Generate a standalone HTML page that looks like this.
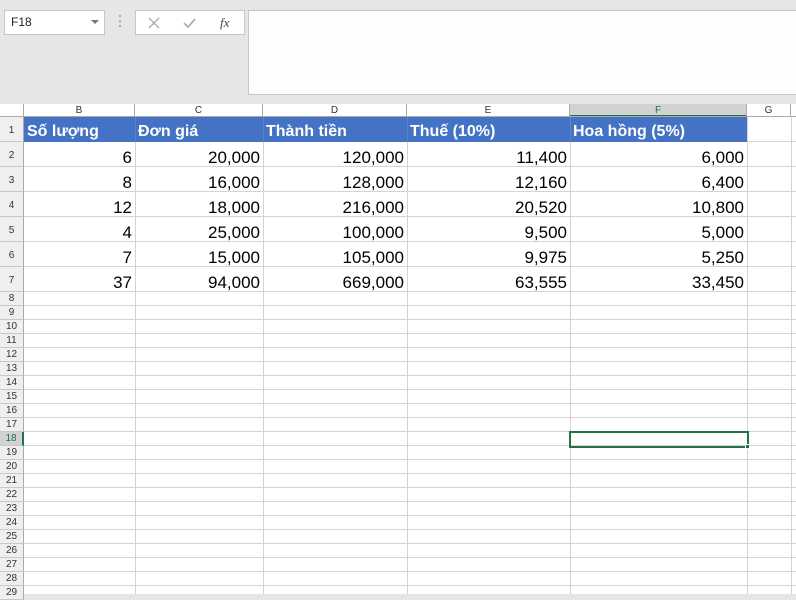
<!DOCTYPE html>
<html><head><meta charset="utf-8"><style>
*{margin:0;padding:0;box-sizing:border-box}
body{width:796px;height:594px;overflow:hidden;background:#e6e6e6;position:relative;font-family:"Liberation Sans",sans-serif}
.a{position:absolute}
.ch{position:absolute;top:104px;height:13px;font-size:10px;color:#333;text-align:center;line-height:13px;border-right:1px solid #ababab;background:#fff}
.rn{position:absolute;left:0;width:24px;font-size:10px;color:#333;text-align:center;background:#efefef;border-bottom:1px solid #c8c8c8;border-right:1px solid #ababab}
.c{position:absolute;font-size:17px;color:#000;text-align:right;padding-right:3px;line-height:25px;height:25px;margin-top:2px}
.h{position:absolute;top:119px;height:25px;line-height:25px;font-size:16px;font-weight:bold;color:#fff;padding-left:3px}
</style></head><body>
<div class="a" style="left:4px;top:10px;width:101px;height:25px;background:#fff;border:1px solid #c6c6c6;font-size:12px;line-height:23px;padding-left:6px;color:#222">F18</div>
<div class="a" style="left:91px;top:20px;width:0;height:0;border-left:4px solid transparent;border-right:4px solid transparent;border-top:4px solid #777"></div>
<div class="a" style="left:119px;top:15px;width:2px;height:2px;background:#aaa;box-shadow:0 5px 0 #aaa,0 10px 0 #aaa"></div>
<div class="a" style="left:135px;top:10px;width:110px;height:25px;background:#fff;border:1px solid #c6c6c6"></div>
<svg class="a" style="left:146px;top:15px" width="90" height="16"><path d="M3 3l10 10M13 3l-10 10" stroke="#b0b0b0" stroke-width="1.5"/><path d="M38 8l4 4 7-8" stroke="#b0b0b0" stroke-width="1.8" fill="none"/><text x="74" y="12" font-family="Liberation Serif" font-style="italic" font-size="13" fill="#444">fx</text></svg>
<div class="a" style="left:248px;top:10px;width:548px;height:85px;background:#fdfdfd;border:1px solid #c6c6c6;border-right:none"></div>
<div class="a" style="left:0;top:104px;width:796px;height:490px;background:#fff"></div>
<div class="a" style="left:0;top:104px;width:24px;height:13px;background:#fff;border-right:1px solid #ababab;border-bottom:1px solid #ababab"></div>
<div class="ch" style="left:24px;width:111px">B</div>
<div class="ch" style="left:135px;width:128px">C</div>
<div class="ch" style="left:263px;width:144px">D</div>
<div class="ch" style="left:407px;width:163px">E</div>
<div class="ch" style="left:570px;width:177px;background:#d2d2d2;border-bottom:2px solid #217346;color:#217346">F</div>
<div class="ch" style="left:747px;width:44px">G</div>
<div class="a" style="left:0;top:116px;width:796px;height:1px;background:#ababab"></div>
<div class="a" style="left:24px;top:117px;width:772px;height:477px;background:
linear-gradient(90deg,transparent 111px,#d4d4d4 111px,#d4d4d4 112px,transparent 112px,transparent 239px,#d4d4d4 239px,#d4d4d4 240px,transparent 240px,transparent 383px,#d4d4d4 383px,#d4d4d4 384px,transparent 384px,transparent 546px,#d4d4d4 546px,#d4d4d4 547px,transparent 547px,transparent 723px,#d4d4d4 723px,#d4d4d4 724px,transparent 724px,transparent 767px,#d4d4d4 767px,#d4d4d4 768px,transparent 768px)"></div>
<div class="a" style="left:24px;top:117px;width:772px;height:175px;background:repeating-linear-gradient(180deg,transparent 0,transparent 24px,#d4d4d4 24px,#d4d4d4 25px)"></div>
<div class="a" style="left:24px;top:292px;width:772px;height:302px;background:repeating-linear-gradient(180deg,transparent 0,transparent 13px,#d4d4d4 13px,#d4d4d4 14px)"></div>
<div class="a" style="left:24px;top:117px;width:723px;height:25px;background:#4472c4"></div>
<div class="a" style="left:24px;top:117px;width:723px;height:25px;background:linear-gradient(90deg,transparent 111px,#5a83cc 111px,#5a83cc 112px,transparent 112px,transparent 239px,#5a83cc 239px,#5a83cc 240px,transparent 240px,transparent 383px,#5a83cc 383px,#5a83cc 384px,transparent 384px,transparent 546px,#5a83cc 546px,#5a83cc 547px,transparent 547px)"></div>
<div class="h" style="left:24px">Số lượng</div>
<div class="h" style="left:135px">Đơn giá</div>
<div class="h" style="left:263px">Thành tiền</div>
<div class="h" style="left:407px">Thuế (10%)</div>
<div class="h" style="left:570px">Hoa hồng (5%)</div>
<div class="rn" style="top:117px;height:25px;line-height:28px">1</div>
<div class="rn" style="top:142px;height:25px;line-height:28px">2</div>
<div class="rn" style="top:167px;height:25px;line-height:28px">3</div>
<div class="rn" style="top:192px;height:25px;line-height:28px">4</div>
<div class="rn" style="top:217px;height:25px;line-height:28px">5</div>
<div class="rn" style="top:242px;height:25px;line-height:28px">6</div>
<div class="rn" style="top:267px;height:25px;line-height:28px">7</div>
<div class="rn" style="top:292px;height:14px;line-height:14px">8</div>
<div class="rn" style="top:306px;height:14px;line-height:14px">9</div>
<div class="rn" style="top:320px;height:14px;line-height:14px">10</div>
<div class="rn" style="top:334px;height:14px;line-height:14px">11</div>
<div class="rn" style="top:348px;height:14px;line-height:14px">12</div>
<div class="rn" style="top:362px;height:14px;line-height:14px">13</div>
<div class="rn" style="top:376px;height:14px;line-height:14px">14</div>
<div class="rn" style="top:390px;height:14px;line-height:14px">15</div>
<div class="rn" style="top:404px;height:14px;line-height:14px">16</div>
<div class="rn" style="top:418px;height:14px;line-height:14px">17</div>
<div class="rn" style="top:432px;height:14px;line-height:14px;background:#d2d2d2;color:#217346;border-right:2px solid #217346">18</div>
<div class="rn" style="top:446px;height:14px;line-height:14px">19</div>
<div class="rn" style="top:460px;height:14px;line-height:14px">20</div>
<div class="rn" style="top:474px;height:14px;line-height:14px">21</div>
<div class="rn" style="top:488px;height:14px;line-height:14px">22</div>
<div class="rn" style="top:502px;height:14px;line-height:14px">23</div>
<div class="rn" style="top:516px;height:14px;line-height:14px">24</div>
<div class="rn" style="top:530px;height:14px;line-height:14px">25</div>
<div class="rn" style="top:544px;height:14px;line-height:14px">26</div>
<div class="rn" style="top:558px;height:14px;line-height:14px">27</div>
<div class="rn" style="top:572px;height:14px;line-height:14px">28</div>
<div class="rn" style="top:586px;height:14px;line-height:14px">29</div>
<div class="c" style="top:143px;left:24px;width:111px">6</div><div class="c" style="top:143px;left:135px;width:128px">20,000</div><div class="c" style="top:143px;left:263px;width:144px">120,000</div><div class="c" style="top:143px;left:407px;width:163px">11,400</div><div class="c" style="top:143px;left:570px;width:177px">6,000</div>
<div class="c" style="top:168px;left:24px;width:111px">8</div><div class="c" style="top:168px;left:135px;width:128px">16,000</div><div class="c" style="top:168px;left:263px;width:144px">128,000</div><div class="c" style="top:168px;left:407px;width:163px">12,160</div><div class="c" style="top:168px;left:570px;width:177px">6,400</div>
<div class="c" style="top:193px;left:24px;width:111px">12</div><div class="c" style="top:193px;left:135px;width:128px">18,000</div><div class="c" style="top:193px;left:263px;width:144px">216,000</div><div class="c" style="top:193px;left:407px;width:163px">20,520</div><div class="c" style="top:193px;left:570px;width:177px">10,800</div>
<div class="c" style="top:218px;left:24px;width:111px">4</div><div class="c" style="top:218px;left:135px;width:128px">25,000</div><div class="c" style="top:218px;left:263px;width:144px">100,000</div><div class="c" style="top:218px;left:407px;width:163px">9,500</div><div class="c" style="top:218px;left:570px;width:177px">5,000</div>
<div class="c" style="top:243px;left:24px;width:111px">7</div><div class="c" style="top:243px;left:135px;width:128px">15,000</div><div class="c" style="top:243px;left:263px;width:144px">105,000</div><div class="c" style="top:243px;left:407px;width:163px">9,975</div><div class="c" style="top:243px;left:570px;width:177px">5,250</div>
<div class="c" style="top:268px;left:24px;width:111px">37</div><div class="c" style="top:268px;left:135px;width:128px">94,000</div><div class="c" style="top:268px;left:263px;width:144px">669,000</div><div class="c" style="top:268px;left:407px;width:163px">63,555</div><div class="c" style="top:268px;left:570px;width:177px">33,450</div>
<div class="a" style="left:569px;top:431px;width:180px;height:17px;border:2px solid #217346"></div>
<div class="a" style="left:745px;top:444px;width:5px;height:5px;background:#217346;border:1px solid #fff"></div>
</body></html>
